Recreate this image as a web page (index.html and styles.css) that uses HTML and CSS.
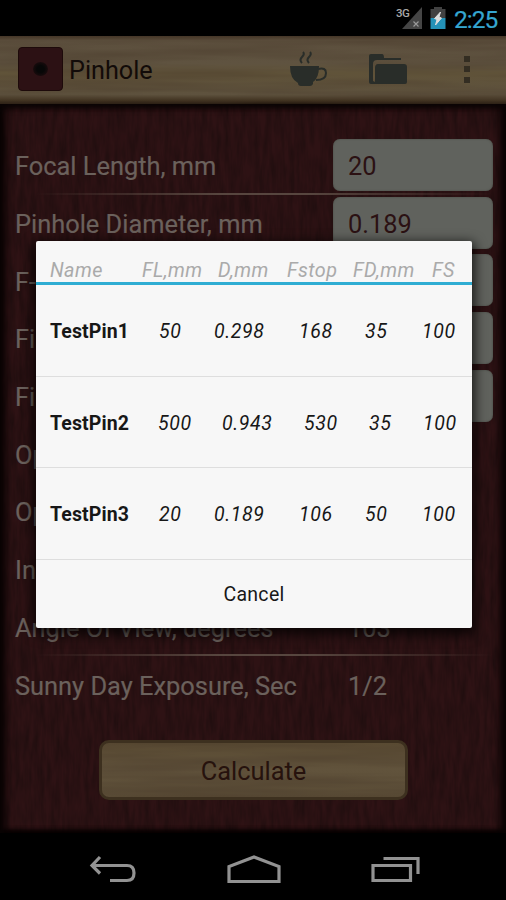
FILE: index.html
```html
<!DOCTYPE html>
<html lang="en">
<head>
<meta charset="utf-8">
<title>Pinhole</title>
<link rel="stylesheet" href="styles.css">
</head>
<body>
<div class="phone">
  <header class="status">
    <svg class="signal" width="28" height="26" viewBox="0 0 28 26"><path d="M26 0V22H6Z" fill="#454545"/><path d="M17.5 14.500l5 5m0-5l-5 5" stroke="#999" stroke-width="1.2"/><text x="0" y="10" class="net">3G</text></svg>
    <svg class="battery" width="16" height="23" viewBox="0 0 16 23"><path d="M4 0h8v2h3.500v9H.5V2H4z" fill="#414141"/><path d="M.5 11h15v11H.5z" fill="#2492b8"/><path d="M10.500 5L4.500 11.500l2.500 1-1.500 5.500 6-7-2.500-1z" fill="#ddd" stroke="#ddd"/></svg>
    <span class="clock">2:25</span>
  </header>
  <div class="appbar">
    <svg class="grain" width="506" height="68"><filter id="pine" x="0" y="0" width="1" height="1" color-interpolation-filters="sRGB"><feTurbulence type="fractalNoise" baseFrequency="0.005 0.09" numOctaves="3" seed="7"/><feColorMatrix values="0 0 0 0 .28  0 0 0 0 .22  0 0 0 0 .16  .9 0 0 0 -.3"/></filter><rect width="506" height="68" filter="url(#pine)"/></svg>
    <div class="logo"><i></i></div>
    <h1>Pinhole</h1>
    <svg class="cup" width="40" height="38" viewBox="0 0 40 38"><path d="M1 15h29q0 12-6 16v2q-1 2-3 2h-9q-3 0-3-3Q1 28 1 15z"/><path class="line" d="M29 18q8-2 8 4 0 7-10 7M13 12q-3-3 0-6t1-5M20 12q-3-3 0-6t1-5"/></svg>
    <svg class="folder" width="38" height="32" viewBox="0 0 38 32"><path d="M0 3q0-2 2-2h11q2 0 2 4h17v2H8q-4 0-4 4v17l2 1V15q0-4 3-4h26q3 0 3 3v15q0 2-2 2H2q-2 0-2-2z"/></svg>
    <div class="more"><i></i><i></i><i></i></div>
  </div>
  <main class="board">
    <svg class="grain" width="506" height="729"><filter id="mahogany" x="0" y="0" width="1" height="1" color-interpolation-filters="sRGB"><feTurbulence type="fractalNoise" baseFrequency="0.2 0.035" numOctaves="3" seed="3"/><feColorMatrix values="0 0 0 0 .08  0 0 0 0 .04  0 0 0 0 .04  .9 0 0 0 -.25"/></filter><rect width="506" height="729" filter="url(#mahogany)"/></svg>
    <div class="form">
      <div class="row lined"><label>Focal Length, mm</label><b class="field">20</b></div>
      <div class="row"><label>Pinhole Diameter, mm</label><b class="field">0.189</b></div>
      <div class="row"><label>F-</label><b class="field"></b></div>
      <div class="row"><label>Fi</label><b class="field"></b></div>
      <div class="row"><label>Fi</label><b class="field"></b></div>
      <div class="row"><label>Op</label></div>
      <div class="row"><label>Op</label></div>
      <div class="row"><label>In</label></div>
      <div class="row lined"><label>Angle Of View, degrees</label><span class="value">103</span></div>
      <div class="row"><label>Sunny Day Exposure, Sec</label><span class="value">1/2</span></div>
    </div>
    <button class="calc"><svg class="grain" width="309" height="60"><rect width="309" height="60" filter="url(#pine)"/></svg><span>Calculate</span></button>
  </main>
  <nav class="nav">
    <svg width="48" height="28" viewBox="0 0 48 28"><path d="M21 25.500H38q7 0 7-7.500t-7-7.500H4M11 2L3 10.500l8 8"/></svg>
    <svg width="54" height="29" viewBox="0 0 54 29"><path d="M2 26.500V11.500L27 2l25 9.500v15z"/></svg>
    <svg width="50" height="28" viewBox="0 0 50 28"><path d="M2 10.500h37.500v15H2zM12.500 3.500h34.500v15.500"/></svg>
  </nav>
  <section class="dialog">
    <div class="head"><span>Name</span><span>FL,mm</span><span>D,mm</span><span>Fstop</span><span>FD,mm</span><span>FS</span></div>
    <div class="item"><strong>TestPin1</strong><span>50</span><span>0.298</span><span>168</span><span>35</span><span>100</span></div>
    <div class="item wide"><strong>TestPin2</strong><span>500</span><span>0.943</span><span>530</span><span>35</span><span>100</span></div>
    <div class="item"><strong>TestPin3</strong><span>20</span><span>0.189</span><span>106</span><span>50</span><span>100</span></div>
    <div class="cancel">Cancel</div>
  </section>
</div>
</body>
</html>
```
FILE: styles.css
```css
* { box-sizing: border-box; }
body { margin: 0; background: #000; font-family: Roboto, "Liberation Sans", sans-serif; }
.phone { position: relative; width: 506px; height: 900px; overflow: hidden; display: flex; flex-direction: column; }
.status { height: 36px; display: flex; align-items: flex-start; padding: 7px 8px 0 396px; }
.signal { flex: none; overflow: visible; margin-right: 6px; }
.net { font: 500 11.500px Roboto, sans-serif; letter-spacing: -.5px; fill: #a8a8a8; }
.battery { flex: none; }
.clock { margin-left: 8px; font-size: 24.500px; line-height: 25px; letter-spacing: -1px; color: #35a6d0; -webkit-text-stroke: .2px #35a6d0; }
.grain { position: absolute; left: 0; top: 0; }
.appbar { position: relative; height: 68px; display: flex; align-items: center; padding: 0 0 2px 18px; overflow: hidden; background: linear-gradient(#443527, #5c4f3d 6%, #5f5340 40%, #605339 55%, #5e523e 86%, #403220 95%, #241910); }
.appbar > * { flex: none; }
.appbar > :not(.grain) { position: relative; }
.logo { width: 45px; height: 44px; border-radius: 4px; background: #2c1114; border: 1px solid #1d0a0a; display: grid; place-items: center; }
.logo i { width: 15px; height: 14px; border-radius: 50%; background: radial-gradient(#070707 35%, #1d0c0e 80%); }
h1 { margin: 0 0 0 6px; width: 221px; font-size: 25.200px; line-height: 30px; font-weight: 400; color: #120b09; padding-top: 3px; }
.cup, .folder { fill: #292d29; }
.cup { top: 1px; left: -1px; }
.cup .line { fill: none; stroke: #292d29; stroke-width: 2; }
.folder { margin-left: 39px; }
.more { display: grid; gap: 4.500px; margin-left: 57px; }
.more i { width: 6px; height: 6px; background: #332d22; }
.board { position: relative; height: 729px; background: #2e1214; padding: 33px 13px 0 15px; }
.board::before { content: ""; position: absolute; inset: 0; z-index: 1; box-shadow: inset 0 4px 6px #0a0404, inset 7px 0 8px -2px #080303, inset -7px 0 8px -2px #080303, inset 0 -3px 4px #080303; pointer-events: none; }
.form, .calc { position: relative; }
.row { height: 57.700px; display: grid; grid-template-columns: 318px 160px; align-items: center; position: relative; color: #6b615c; font-size: 25.400px; line-height: 30px; white-space: nowrap; }
.row label, .value { -webkit-text-stroke: .2px #6b615c; padding-top: 1px; }
.lined::after { content: ""; position: absolute; left: 20px; right: 0; bottom: 0; height: 2px; background: linear-gradient(90deg, transparent, #57463f 40%, #57463f 60%, transparent); }
.field { height: 52px; border-radius: 7px; background: #60625d; color: #2b1113; font-weight: 400; padding: 12px 15px; position: relative; top: -1px; box-shadow: inset 0 0 2px #454840; }
.value { padding-left: 15px; }
.calc { display: flex; align-items: center; justify-content: center; margin: 26px 0 0 84px; width: 309px; height: 60px; border: 3px solid #3d301f; border-radius: 10px; background: linear-gradient(#5a4b33, #61533c 50%, #5a4c36); font: 25.400px Roboto, sans-serif; color: #26120d; overflow: hidden; padding: 2px 0 0; }
.calc span { position: relative; }
.nav { height: 67px; display: flex; padding: 22px 0 0 89px; background: #000; }
.nav svg { fill: none; stroke: #929292; stroke-width: 3.200px; }
.nav svg + svg { margin-left: 90px; }
.dialog { position: absolute; z-index: 2; left: 36px; top: 241px; width: 436px; height: 387px; border-radius: 2px; background: #f7f7f7; box-shadow: 0 4px 12px 3px rgba(0,0,0,.75); color: #171717; font-size: 19.500px; letter-spacing: .15px; white-space: nowrap; }
.head { height: 44px; border-bottom: 3px solid #2fadd3; padding: 18px 0 0 14px; display: grid; grid-template-columns: 92px 76px 69px 66px 79px 40px; line-height: 24px; letter-spacing: .4px; font-size: 19.800px; font-style: italic; color: #aaa; }
.item { height: 91.500px; border-bottom: 1.500px solid #dedede; padding: 3px 0 0 14px; display: grid; grid-template-columns: 109px 55px 85px 66px 57px 40px; align-items: center; font-style: italic; letter-spacing: .6px; }
.item.wide { grid-template-columns: 108px 64px 82px 65px 54px 40px; }
.item strong { font-style: normal; letter-spacing: .1px; }
.cancel { height: 68px; padding-top: 2px; display: grid; place-items: center; letter-spacing: .3px; }
```
